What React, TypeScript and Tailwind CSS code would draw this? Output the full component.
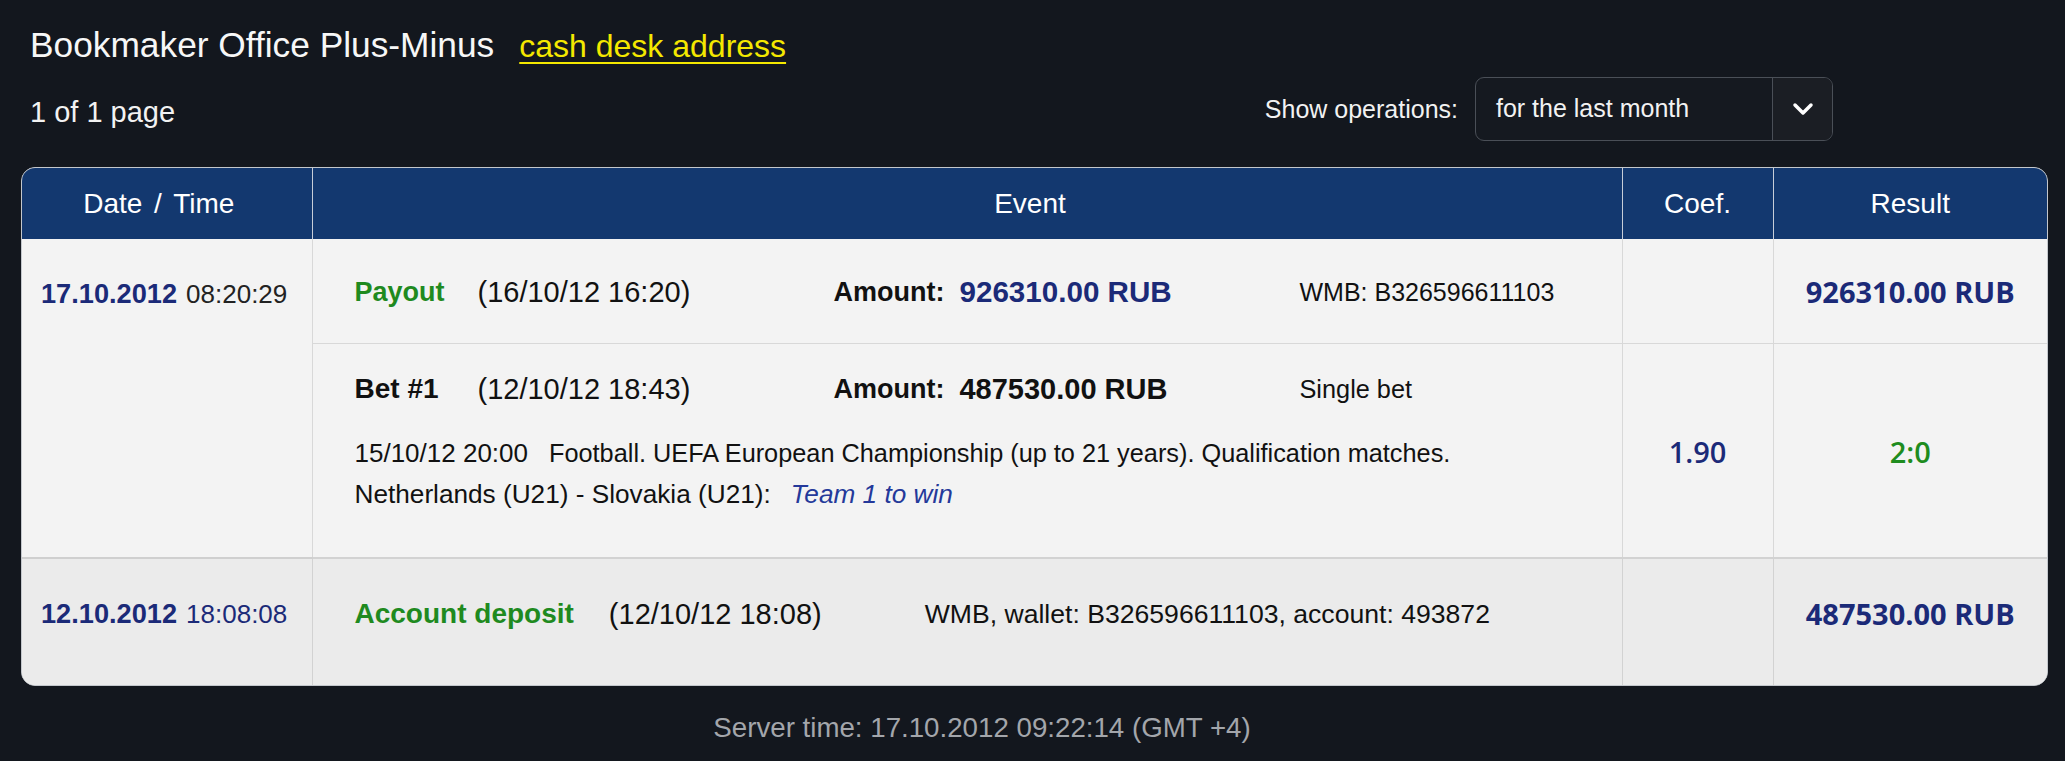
import React from "react";

const navy = "text-[#1b2a78]";

export default function App() {
  return (
    <div className="min-h-screen w-full bg-[#13171e] font-['Liberation_Sans',Arial,sans-serif] text-white">
      <div className="flex items-baseline pl-[30px] pt-[25px]">
        <h1 className="text-[35.3px] font-normal leading-[40px] text-[#f7f7f7]">Bookmaker Office Plus-Minus</h1>
        <a className="ml-[25px] text-[32px] leading-[40px] text-[#f4e800] underline decoration-2 underline-offset-[5px]">
          cash desk address
        </a>
      </div>

      <div className="mt-[11px] flex h-[64px] items-center justify-between pl-[30px] pr-[232px]">
        <span className="pt-[8px] text-[29px] text-[#f2f2f2]">1 of 1 page</span>
        <div className="flex items-center gap-[17px]">
          <span className="pt-[2px] text-[25px] text-[#f2f2f2]">Show operations:</span>
          <div className="flex h-[64px] w-[358px] overflow-hidden rounded-[9px] border border-[#4a4f57] bg-[#151920]">
            <div className="flex flex-1 items-center pl-[20px] text-[25px] text-[#f2f2f2]">for the last month</div>
            <div className="flex w-[60px] items-center justify-center border-l border-[#4a4f57] bg-[#1b1e24]">
              <svg width="24" height="14" viewBox="0 0 24 14" fill="none">
                <path d="M4 3 L12 11 L20 3" stroke="white" strokeWidth="3.5" strokeLinecap="round" strokeLinejoin="round" />
              </svg>
            </div>
          </div>
        </div>
      </div>

      <div className="ml-[21px] mr-[17px] mt-[26px] overflow-hidden rounded-[14px] border border-[#c3c7cc] bg-[#f3f3f3]">
        <table className="w-full table-fixed border-collapse text-[#111]">
          <colgroup>
            <col className="w-[290px]" />
            <col className="w-[1310px]" />
            <col className="w-[151px]" />
            <col />
          </colgroup>
          <thead>
            <tr className="h-[71px] bg-[#13386f] text-[28px] font-normal text-white">
              <th className="pr-[16px] font-normal [word-spacing:4px]">Date / Time</th>
              <th className="border-l border-[#c7cdd8] pl-[126px] font-normal">Event</th>
              <th className="border-l border-[#c7cdd8] font-normal">Coef.</th>
              <th className="border-l border-[#c7cdd8] font-normal">Result</th>
            </tr>
          </thead>
          <tbody>
            <tr className="h-[104px]">
              <td rowSpan={2} className="pl-[19px] pt-[37px] align-top leading-[36px]">
                <span className={`text-[27.2px] font-bold ${navy}`}>17.10.2012</span>
                <span className="ml-[9px] text-[26px] text-[#222]">08:20:29</span>
              </td>
              <td className="border-l border-[#d8d8d8] pl-[42px] pt-[3px] align-middle">
                <div className="flex items-center leading-[36px]">
                  <span className="w-[123px] text-[27px] font-bold text-[#1f8a1f]">Payout</span>
                  <span className="w-[356px] text-[29px]">(16/10/12 16:20)</span>
                  <span className="flex w-[466px] items-center">
                    <span className="text-[27px] font-bold">Amount:</span>
                    <span className={`ml-[15px] text-[29.6px] font-bold ${navy}`}>926310.00 RUB</span>
                  </span>
                  <span className="text-[25px]">WMB: B326596611103</span>
                </div>
              </td>
              <td className="border-l border-[#d8d8d8]"></td>
              <td className="border-l border-[#d8d8d8] pt-[2px] text-center align-middle">
                <span className={`font-['Open_Sans',sans-serif] text-[29px] font-bold ${navy}`}>926310.00 RUB</span>
              </td>
            </tr>
            <tr className="h-[215px]">
              <td className="border-l border-t border-[#d8d8d8] pl-[42px] pt-[27px] align-top">
                <div className="flex items-center leading-[36px]">
                  <span className="w-[123px] text-[28px] font-bold">Bet #1</span>
                  <span className="w-[356px] text-[29px]">(12/10/12 18:43)</span>
                  <span className="flex w-[466px] items-center">
                    <span className="text-[27px] font-bold">Amount:</span>
                    <span className="ml-[15px] text-[29px] font-bold">487530.00 RUB</span>
                  </span>
                  <span className="text-[25.3px]">Single bet</span>
                </div>
                <div className="mt-[29px] text-[26px] leading-[34px]">
                  <span className="mr-[21px]">15/10/12 20:00</span>
                  <span className="text-[25.3px]">Football. UEFA European Championship (up to 21 years). Qualification matches.</span>
                </div>
                <div className="mt-[7px] text-[26.2px] leading-[34px]">
                  <span className="mr-[20px]">Netherlands (U21) - Slovakia (U21):</span>
                  <span className="italic text-[#24399a]">Team 1 to win</span>
                </div>
              </td>
              <td className="border-l border-t border-[#d8d8d8] pt-[3px] text-center align-middle">
                <span className={`font-['Open_Sans',sans-serif] text-[29px] font-semibold ${navy}`}>1.90</span>
              </td>
              <td className="border-l border-t border-[#d8d8d8] pt-[3px] text-center align-middle">
                <span className="font-['Open_Sans',sans-serif] text-[29px] font-semibold text-[#1e8c1e]">2:0</span>
              </td>
            </tr>
            <tr className="h-[127px] bg-[#ebebeb]">
              <td className="border-t-2 border-[#cfcfcf] pl-[19px] pt-[37px] align-top leading-[36px]">
                <span className={`text-[27.2px] font-bold ${navy}`}>12.10.2012</span>
                <span className={`ml-[9px] text-[26px] ${navy}`}>18:08:08</span>
              </td>
              <td className="border-l border-t-2 border-[#d2d2d2] pl-[42px] pt-[37px] align-top">
                <div className="flex items-center leading-[36px]">
                  <span className="mr-[35px] text-[28px] font-bold text-[#1f8a1f]">Account deposit</span>
                  <span className="mr-[103px] text-[29px]">(12/10/12 18:08)</span>
                  <span className="text-[26.6px]">WMB, wallet: B326596611103, account: 493872</span>
                </div>
              </td>
              <td className="border-l border-t-2 border-[#d2d2d2]"></td>
              <td className="border-l border-t-2 border-[#d2d2d2] pt-[37px] text-center align-top leading-[36px]">
                <span className={`font-['Open_Sans',sans-serif] text-[29px] font-bold ${navy}`}>487530.00 RUB</span>
              </td>
            </tr>
          </tbody>
        </table>
      </div>

      <div className="mt-[26px] pr-[101px] text-center text-[27.7px] leading-[32px] text-[#a3a6ab]">
        Server time: 17.10.2012 09:22:14 (GMT +4)
      </div>
    </div>
  );
}
